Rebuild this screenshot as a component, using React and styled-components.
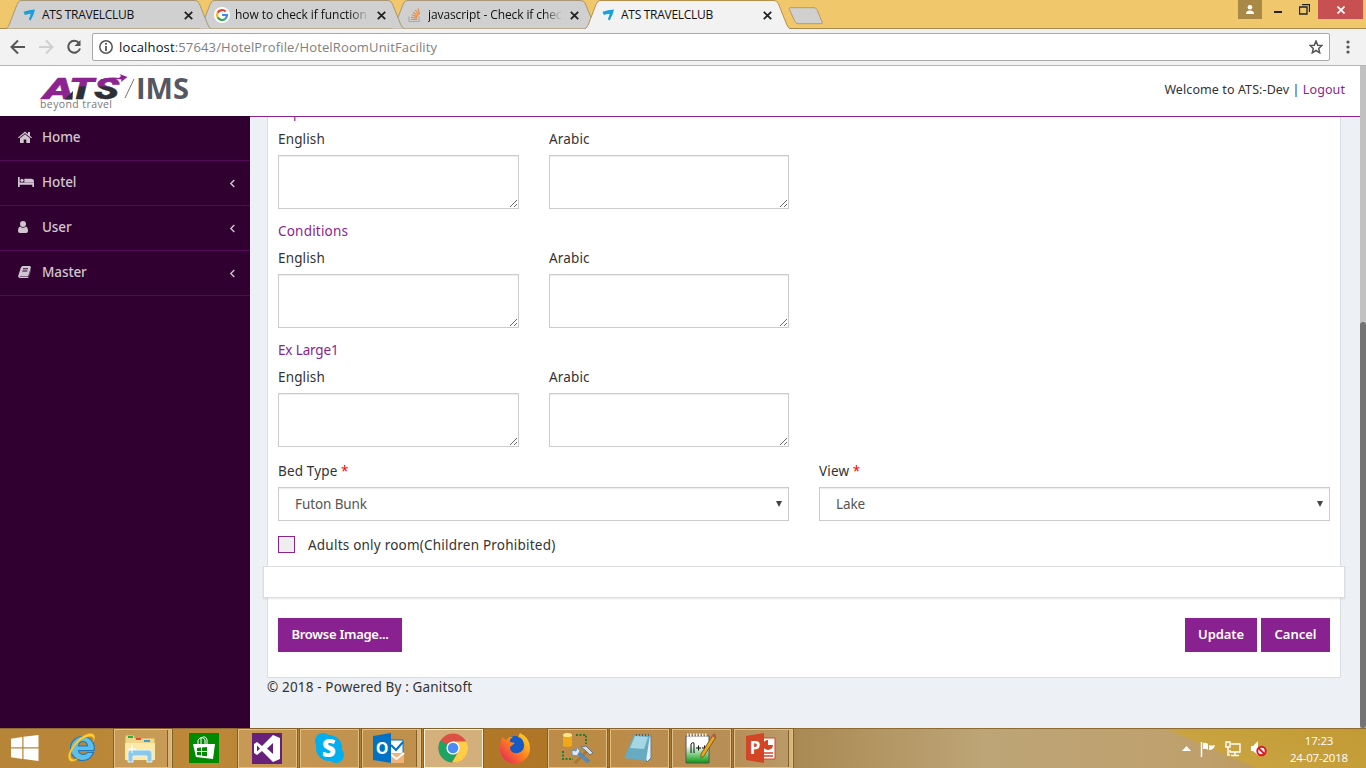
import React from "react";
import styled, { createGlobalStyle, css } from "styled-components";

const Global = createGlobalStyle`
  *{box-sizing:border-box}
  html,body{margin:0;padding:0;overflow:hidden}
  body{width:1366px;height:768px;font-family:"Noto Sans","Open Sans",sans-serif;font-size:13.5px;color:#333}
  svg{display:block;flex:none}
`;

const ui = css`font-family:"Open Sans","Noto Sans",sans-serif;`;

const Screen = styled.div`width:1366px;height:768px;display:flex;flex-direction:column;overflow:hidden;`;

/* browser frame */
const TitleBar = styled.div`height:29px;flex:none;display:flex;background:#f0c76b;border-bottom:1px solid #a88a4e;padding-left:6px;`;
const TabShape = styled.svg`position:absolute;inset:0;`;
const Tab = styled.div`
  position:relative;width:205px;height:29px;margin-right:-12px;flex:none;
  z-index:${p => p.$z};display:flex;align-items:center;padding:1px 16px 0 15px;
`;
const TabIcon = styled.span`position:relative;width:16px;margin-right:5px;`;
const TabTitle = styled.span`
  ${ui} position:relative;width:137px;font-size:12px;line-height:16px;color:#111;white-space:nowrap;overflow:hidden;
  letter-spacing:${p => p.$ls || 0}px;
  ${p => p.$fade && css`mask-image:linear-gradient(90deg,#000 84%,transparent 98%);`}
`;
const TabClose = styled.svg`position:relative;margin-left:5px;`;
const NewTab = styled.svg`margin:7px 0 0 10px;`;
const WindowButtons = styled.div`display:flex;margin-left:auto;margin-right:3px;height:19px;`;
const WinBtn = styled.div`width:${p => p.$w}px;height:19px;display:flex;justify-content:center;align-items:center;background:${p => p.$bg || "transparent"};`;

const Toolbar = styled.div`height:37px;flex:none;display:flex;align-items:center;background:#f2f2f2;border-bottom:1px solid #b6b4b6;padding:0 10px;`;
const NavIcons = styled.div`display:flex;gap:12px;width:82px;`;
const UrlBox = styled.div`
  ${ui} width:1238px;height:28px;background:#fff;border:1px solid #a9a9a9;border-radius:2px;display:flex;align-items:center;
  padding:0 6px;font-size:13px;color:#808080;
`;
const Url = styled.span`margin-left:6px;flex:1;letter-spacing:${p => p.$ls}px;b{font-weight:400;color:#111}`;
const Kebab = styled.svg`margin-left:16px;`;

/* site */
const Page = styled.div`height:662px;flex:none;display:flex;background:#edf0f5;`;
const Site = styled.div`width:1360px;display:flex;flex-direction:column;`;
const Scroll = styled.div`width:6px;background:#c1c1c1;padding-top:256px;`;
const Thumb = styled.div`height:406px;background:#737373;border-radius:3px;`;
const Header = styled.header`height:50px;flex:none;background:#fff;display:flex;justify-content:space-between;padding:0 15px 0 38px;`;
const Account = styled.div`font-size:12.5px;line-height:20px;padding-top:14px;letter-spacing:.09px;color:#333;white-space:nowrap;a{color:#8b2490}`;
const Body = styled.div`display:flex;height:612px;`;
const Sidebar = styled.nav`width:250px;flex:none;background:#2f0030;`;
const NavItem = styled.div`
  height:45px;border-bottom:1px solid #55085a;display:flex;align-items:center;padding:0 13px 3px 18px;
  color:#cfc6cf;letter-spacing:-.1px;font-weight:500;
`;
const NavIcon = styled.span`width:24px;display:flex;`;
const NavText = styled.span`flex:1;`;
const Content = styled.main`width:1110px;height:612px;border-top:1px solid #8b2490;overflow:hidden;`;
const Card = styled.section`width:1074px;height:576px;margin-left:17px;margin-top:-15px;background:#fff;border:1px solid #dcdde0;border-top:0;padding:0 10px;`;
const Heading = styled.div`height:27px;line-height:20px;color:#8b2490;letter-spacing:${p => p.$ls ?? 0.2}px;`;
const Pair = styled.div`display:grid;grid-template-columns:241px 240px;column-gap:30px;`;
const Halves = styled.div`display:grid;grid-template-columns:511px 511px;column-gap:30px;margin-top:2px;`;
const Label = styled.label`display:block;height:26px;line-height:20px;color:#333;letter-spacing:.15px;i{color:#f00;font-style:normal}`;
const Area = styled.textarea`display:block;width:100%;height:54px;margin:0 0 12px;border:1px solid #ccc;box-shadow:inset 0 1px 1px rgba(0,0,0,.075);resize:both;background:#fff;`;
const Select = styled.div`
  height:34px;border:1px solid #ccc;box-shadow:inset 0 1px 1px rgba(0,0,0,.075);display:flex;align-items:center;justify-content:space-between;
  padding:0 6px 1px 16px;color:#555;letter-spacing:-.1px;
`;
const CheckRow = styled.div`display:flex;align-items:center;height:18px;margin-top:15px;padding-bottom:1px;gap:13px;letter-spacing:.22px;`;
const Box = styled.span`width:17px;height:17px;border:1px solid #8b2490;background:#eee;`;
const Strip = styled.div`position:relative;height:32px;margin:12px -15px 20px;background:#fff;border:1px solid #dcdde0;box-shadow:0 1px 2px rgba(0,0,0,.1);`;
const Actions = styled.div`display:flex;gap:4px;`;
const Button = styled.button`
  width:${p => p.$w}px;height:34px;border:0;padding:0 0 3px;background:#892290;color:#fff;font-family:"Noto Sans",sans-serif;
  font-size:13px;font-weight:600;letter-spacing:${p => p.$ls}px;white-space:nowrap;
  margin-right:${p => (p.$push ? "auto" : 0)};
`;
const Footer = styled.footer`margin-left:17px;line-height:18px;letter-spacing:.15px;`;

/* taskbar */
const Taskbar = styled.div`
  height:40px;flex:none;display:flex;
  background:linear-gradient(23.5deg,transparent 0 86%,#c8a33f 86.6%,#c29a35 100%),linear-gradient(90deg,#b78538 0,#bd8838 15%,#b27b2c 28%,#ad7424 44%,#a87a3a 54%,#ab8b55 59%,#bda577 72%,#bfa06c 88%,#b98f42 100%);
  border-top:1px solid #8f6b33;
`;
const Task = styled.div`
  width:${p => p.$w || 59}px;margin-right:3px;display:flex;align-items:center;justify-content:center;height:39px;
  ${p => p.$open && css`border:1px solid ${p.$active ? "#fff3d9" : "#dfbf88"};outline:1px solid #85602a;background:rgba(255,245,225,${p.$active ? 0.45 : 0.18});`}
  ${p => p.$stack && css`box-shadow:inset -4px 0 0 -1px #d7b47a, inset -5px 0 0 -1px #85602a;padding-right:4px;`}
`;
const TaskArt = styled.span`margin-left:-2px;margin-top:-1px;`;
const Tray = styled.div`margin-left:auto;display:flex;align-items:center;gap:9px;padding-right:16px;`;
const Clock = styled.div`${ui} width:62px;margin-left:12px;font-size:11.5px;line-height:17px;letter-spacing:-.2px;color:#fff;text-align:center;white-space:nowrap;`;

const AtsMark = () => (
  <svg width="16" height="16" viewBox="0 0 16 16"><path d="M2.500 4.800Q8 3 14 2.500 13 8 9.500 13.500L7.800 12.200Q9.400 9.500 9.600 6.800 6 7 3.800 8Z" fill="#17a0dc" /></svg>
);
const GoogleMark = () => (
  <svg width="16" height="16" viewBox="0 0 16 16"><circle cx="8" cy="8" r="8" fill="#fff" />
    <g fill="none" strokeWidth="2.2"><path d="M11.6 4.5A5 5 0 0 0 3.6 5.7" stroke="#ea4335" /><path d="M3.6 5.7a5 5 0 0 0 0 4.6" stroke="#fbbc05" /><path d="M3.6 10.3a5 5 0 0 0 7.8 1.4" stroke="#34a853" /><path d="M11.4 11.7A5 5 0 0 0 13 8H8" stroke="#4285f4" /></g>
  </svg>
);
const StackMark = () => (
  <svg width="16" height="16" viewBox="0 0 16 16" fill="none"><path d="M2 9.5V14.5H12V9.5" stroke="#aaa" strokeWidth="1.2" /><path d="M4 12.5h6M4.1 10.3l6 .9M4.7 7.7l5.6 2.2M6 5.2l5 3.5M8.2 3l3.7 4.7M11 1.5l1.7 5.6" stroke="#ec8a3c" strokeWidth="1.2" /></svg>
);
const BrowserTab = ({ title, icon, active, z, fade, ls }) => (
  <Tab $z={z}>
    <TabShape width="205" height="29" viewBox="0 0 205 29"><path d="M0 28.5C2 28 2.5 26 3.5 24L11 4.5Q12.5.5 15 .5H189Q192 .5 193.5 4L201.5 24Q203 28 205 28.5" fill={active ? "#f2f2f2" : "#d0d0d0"} stroke={active ? "#b7924b" : "#a89877"} />
      {active && <path d="M1 28.5H204" stroke="#f2f2f2" />}</TabShape>
    <TabIcon>{icon}</TabIcon><TabTitle $fade={fade} $ls={ls}>{title}</TabTitle>
    <TabClose width="9" height="9" viewBox="0 0 9 9"><path d="m.8.8 7.4 7.4M8.2.8.8 8.2" stroke="#222" strokeWidth="1.8" /></TabClose>
  </Tab>
);

const Logo = () => (
  <svg width="156" height="50" viewBox="38 0 156 50">
    <defs><linearGradient id="ats" x1="0" y1="12" x2="0" y2="33" gradientUnits="userSpaceOnUse"><stop offset=".38" stopColor="#8b2490" /><stop offset=".42" stopColor="#2c2f38" /></linearGradient></defs>
    <g fontFamily="Roboto" fontWeight="900" fontStyle="italic" fontSize="29" strokeWidth=".4">
      <text x="43" y="33" textLength="31" lengthAdjust="spacingAndGlyphs" fill="#8b2490" stroke="#8b2490">A</text>
      <text x="69" y="33" textLength="50" lengthAdjust="spacingAndGlyphs" fill="url(#ats)" stroke="url(#ats)">TS</text>
    </g>
    <path d="M64.500 33.500 73 25l-.5 8.500Z" fill="#2c2f38" />
    <path d="M100 13.500q11-3 19-1.500l2-2-1.500-2 8 3-6.500 5 .5-2.500q-9-1.500-17 2Z" fill="#8b2490" />
    <path d="m134 13-9 19" stroke="#777" />
    <text x="136" y="33" fontFamily="Open Sans" fontWeight="700" fontSize="29" textLength="53" lengthAdjust="spacingAndGlyphs" fill="#555763">IMS</text>
    <text x="40" y="42" fontFamily="Open Sans" fontSize="10.5" textLength="72" fill="#777">beyond travel</text>
  </svg>
);

const sideIcons = {
  home: <svg width="14" height="12" viewBox="0 0 14 12" fill="#cfc6cf"><path d="M7 .5 0 6.400l.8.9L7 2.200l6.200 5.100.8-.9-2-1.700V1h-2v2Z" /><path d="M2 7.300V12h3.700V8.500h2.600V12H12V7.300L7 3.200Z" /></svg>,
  bed: <svg width="16" height="10" viewBox="0 0 16 10" fill="#cfc6cf"><path d="M0 0h1.700v5.500H16V10h-1.700V7.800H1.700V10H0Z" /><circle cx="4" cy="3.300" r="1.600" /><path d="M6.300 1.800H13a3 3 0 0 1 3 3v.7H6.300Z" /></svg>,
  user: <svg width="10" height="12" viewBox="0 0 10 12" fill="#cfc6cf"><circle cx="5" cy="3" r="3" /><path d="M2.200 5.500Q5 8 7.800 5.500 10 6 10 10q0 2-2 2H2q-2 0-2-2 0-4 2.200-4.500Z" /></svg>,
  book: <svg width="13" height="12" viewBox="0 0 13 12"><path d="M4.500 0H12l1 1-2.500 8.500-1 1H2l-.4.600h9L13 3v1l-2.200 7-.8 1H2Q-.2 12 .3 9.500L3 1.200Z" fill="#cfc6cf" /><path d="M5 2.800h5M4.300 5h5" stroke="#2f0030" /></svg>,
};
const ChevronBox = styled.span`padding-top:3px;`;
const Chevron = () => <ChevronBox><svg width="9" height="9" viewBox="0 0 9 9"><path d="M6.300 1 2.800 4.500 6.300 8" fill="none" stroke="#cfc6cf" strokeWidth="1.400" /></svg></ChevronBox>;
const Item = ({ icon, text, sub }) => <NavItem><NavIcon>{sideIcons[icon]}</NavIcon><NavText>{text}</NavText>{sub && <Chevron />}</NavItem>;

const Languages = () => (
  <Pair>
    <div><Label>English</Label><Area /></div>
    <div><Label>Arabic</Label><Area /></div>
  </Pair>
);
const Arrow = () => <svg width="6" height="6" viewBox="0 0 6 6"><path d="M0 0h6L3 6Z" fill="#444" /></svg>;

const Windows = () => <svg width="28" height="26" viewBox="0 0 28 26" fill="#fff"><path d="M0 3.700 11.300 2v10.300H0ZM12.500 1.800 27.500 0v12.300h-15ZM0 13.500h11.300V24L0 22.300ZM12.500 13.500h15V26l-15-1.900Z" /></svg>;
const IE = () => <svg width="32" height="32" viewBox="0 0 32 32"><path d="M16.500 4.500A11.500 11.500 0 0 1 28 18.500H12.500q.8 4 4.700 4 3 0 4.300-2h6q-3 8-11 8a12 12 0 0 1 0-24Zm-4 9.500h9q-.5-4.500-4.500-4.500T12.500 14Z" fill="#5cc0ee" stroke="#1f79bb" strokeWidth="1.200" /><path d="M5 29.500Q-1 26 6 15 13 4 23 1.500q7-1 5.500 6-.5 1.500-1.500 2.500 1.500-5.500-2.500-5.500Q16 5 9 14 2 24 6 27q3 1 7-1-4 4-8 3.500Z" fill="#ffce33" stroke="#d99d1f" strokeWidth=".5" /></svg>;
const Explorer = () => <svg width="32" height="30" viewBox="0 0 32 30"><path d="M1 4 2 2h8l1 3h20v22H1Z" fill="#f0d68b" stroke="#c9a049" /><path d="M4 3h5v2H4Z" fill="#27ad42" /><path d="M12 5h5v2h-5Z" fill="#e34b2e" /><path d="M20 7h6v2h-6Z" fill="#3a9ce0" /><path d="M1 10h30v17H1Z" fill="#fbe9a8" /><path d="M4 29V20q0-3 3-3h18q3 0 3 3v9h-5v-6H9v6Z" fill="#8bc9ea" stroke="#e5f4fb" /><path d="M8 12v8M4 16h8" stroke="#fff" /></svg>;
const Store = () => <svg width="30" height="30" viewBox="0 0 30 30"><path fill="#008a00" d="M0 0h30v30H0Z" /><path d="M4 11h22l-2 15-17-2Z" fill="#fff" /><path d="M9 11V7q4-5 7 0v4M12 11V5q5-3 6 2v4" stroke="#fff" fill="none" /><path d="m8 15 4-.5V18H8ZM13 14.500l5-.5v4h-5ZM8 19h4v3.500L8 22ZM13 19h5v4.300l-5-.6Z" fill="#008a00" /></svg>;
const VS = () => <svg width="30" height="31" viewBox="0 0 30 31"><path fill="#68217a" d="M0 0h30v31H0Z" /><path d="m21 2 7 3v21l-7 3L10 18l-5 4-3-2V11l3-2 5 4Zm0 8-6 5.500 6 5.500ZM5 12.500v6l3-3Z" fill="#fff" fillRule="evenodd" /></svg>;
const Skype = () => <svg width="30" height="30" viewBox="0 0 30 30"><g fill="#00aff0"><circle cx="15" cy="15" r="13" /><circle cx="9" cy="8" r="8" /><circle cx="22" cy="22" r="8" /></g><text x="15" y="23.500" textAnchor="middle" fontFamily="Open Sans" fontSize="24" fontWeight="800" fill="#fff">S</text></svg>;
const Outlook = () => <svg width="32" height="30" viewBox="0 0 32 30"><path d="M17 7h13v14H17Z" fill="#fff" stroke="#0072c6" /><path d="m18 12 5 5 7-8" stroke="#0072c6" strokeWidth="2" fill="none" /><path d="M16 20h15v10H16Z" fill="#f3b278" /><path d="m16 20 7.500 6 7.500-6" stroke="#fff" strokeWidth="2" fill="none" /><path d="M0 3 18 0v30L0 27Z" fill="#0072c6" /><text x="9" y="21" textAnchor="middle" fontFamily="Open Sans" fontSize="16" fontWeight="700" fill="#fff">O</text></svg>;
const Chrome = () => <svg width="30" height="30" viewBox="0 0 30 30"><circle cx="15" cy="15" r="14.500" fill="#dd5144" /><path d="M15 15 2.500 7.600A14.500 14.500 0 0 0 14 29.500l6-11Z" fill="#1da462" /><path d="M15 8.500h13.300A14.500 14.500 0 0 1 14 29.500l6.600-11.200Z" fill="#ffcd46" /><circle cx="15" cy="15" r="6.600" fill="#fff" /><circle cx="15" cy="15" r="5.300" fill="#4c8bf5" /></svg>;
const Firefox = () => <svg width="32" height="32" viewBox="0 0 32 32"><defs><linearGradient id="fx" x1="1" y1="0" x2="0" y2="1"><stop stopColor="#ffe226" /><stop offset=".5" stopColor="#ff7e20" /><stop offset="1" stopColor="#e31665" /></linearGradient></defs><circle cx="16" cy="16" r="12" fill="#155ac5" /><path d="m3 5 4 3q3-4 7-3-4 2-3 5l5 1-5 4q0 7 8 6 7-2 6-9-1-6-6-7l2-4q10 5 10 15a15 15 0 0 1-30 1Q1 10 3 5Z" fill="url(#fx)" /></svg>;
const Tools = () => <svg width="32" height="32" viewBox="0 0 32 32" fill="none"><path d="M2 3h9v11q-4 2-9 0Z" fill="#efa817" /><ellipse cx="6.500" cy="3" rx="4.500" ry="2" fill="#ffe58a" /><path d="M15 3h10v9M2 19v8h10" stroke="#287b35" strokeWidth="2" strokeDasharray="2 1.500" /><path d="m14 31 13-13" stroke="#a87732" strokeWidth="3" /><path d="m20 15 5-1 7 7-3 2-4-4Z" fill="#d5dce2" stroke="#657582" /><path d="m15 19 13 11" stroke="#5989b5" strokeWidth="4" /><path d="M11 18v5l5 1 3-5-3-4-1 4Z" fill="#dae9f3" stroke="#6d8eab" /></svg>;
const Notepad = () => <svg width="32" height="32" viewBox="0 0 32 32"><path d="m11 3 17 1v22l-4 4Z" fill="#e4eef1" stroke="#667d85" /><path d="M11 3h16L23 29 1 26Z" fill="#67abc2" /><path d="m12 4 13 1-4 12-14-1Z" fill="#a5d6e3" /><path d="M13 3h14" stroke="#49656f" strokeWidth="2" strokeDasharray="1 2" /></svg>;
const Npp = () => <svg width="32" height="31" viewBox="0 0 32 31"><defs><linearGradient id="np" x2="0" y2="1"><stop offset=".35" stopColor="#fff" /><stop offset="1" stopColor="#079a0c" /></linearGradient></defs><path d="M1 3h23v27H1Z" fill="url(#np)" stroke="#555" /><path d="M2 2h21" stroke="#eee" strokeWidth="3" strokeDasharray="1.500 1.500" /><path d="M6 20V11q3-3 3 0v9" stroke="#111" fill="none" /><path d="M11 15h5m-2.500-2.500v5M17 15h5m-2.500-2.500v5" stroke="#111" /><path d="m28 2 3 2-12 19-3 2v-4Z" fill="#eaa61d" stroke="#805b20" /><path d="m27 3 3 2 1-3-2-2Z" fill="#c75045" /></svg>;
const Ppt = () => <svg width="30" height="30" viewBox="0 0 30 30"><path d="M15 5h14v21H15Z" fill="#fff" stroke="#d24625" /><circle cx="22" cy="12" r="5" fill="#d24625" /><path d="M22 12V7h5v5Z" fill="#fff" /><path d="M18 20h9M18 23h9" stroke="#d24625" strokeWidth="1.500" /><path d="M0 3 18 0v30L0 27Z" fill="#d24625" /><text x="9" y="21" textAnchor="middle" fontFamily="Open Sans" fontSize="17" fontWeight="700" fill="#fff">P</text></svg>;

const TaskButton = ({ w, open, stack, active, children }) => <Task $w={w} $open={open} $stack={stack} $active={active}><TaskArt>{children}</TaskArt></Task>;

export default function App() {
  return (
    <Screen>
      <Global />
      <TitleBar>
        <BrowserTab z={3} icon={<AtsMark />} title="ATS TRAVELCLUB" ls={-0.28} />
        <BrowserTab z={2} icon={<GoogleMark />} title="how to check if function i" fade ls={-0.06} />
        <BrowserTab z={1} icon={<StackMark />} title="javascript - Check if check" fade ls={-0.1} />
        <BrowserTab z={4} icon={<AtsMark />} title="ATS TRAVELCLUB" active ls={-0.28} />
        <NewTab width="36" height="18" viewBox="0 0 36 18"><path d="M2 .7h24q2 0 3 2l5 12q1 2-1 2H10q-2 0-3-2L1.500 2.700Q.8.700 2 .7Z" fill="#d0d0d0" stroke="#b59b65" /></NewTab>
        <WindowButtons>
          <WinBtn $w={24} $bg="#a88a46"><svg width="10" height="9" viewBox="0 0 10 9" fill="#fff"><circle cx="5" cy="2.300" r="2.300" /><path d="M1 9Q1 5.500 5 5.500T9 9Z" /></svg></WinBtn>
          <WinBtn $w={32}><svg width="8" height="9"><path d="M0 6h8v2H0Z" fill="#222" /></svg></WinBtn>
          <WinBtn $w={20}><svg width="11" height="11" fill="none" stroke="#222"><path d="M.5 3H8v7H.5ZM3 .5h7.500V8" strokeWidth="1.300" /></svg></WinBtn>
          <WinBtn $w={4} />
          <WinBtn $w={45} $bg="#c75050"><svg width="8" height="8"><path d="m.5.5 7 7m0-7-7 7" stroke="#fff" strokeWidth="1.700" /></svg></WinBtn>
        </WindowButtons>
      </TitleBar>
      <Toolbar>
        <NavIcons>
          <svg width="16" height="16" viewBox="0 0 16 16" fill="none" stroke="#555" strokeWidth="2"><path d="M15 8H2m6-6.500L1.500 8 8 14.500" /></svg>
          <svg width="16" height="16" viewBox="0 0 16 16" fill="none" stroke="#d0d0d0" strokeWidth="2"><path d="M1 8h13M8 1.500 14.500 8 8 14.500" /></svg>
          <svg width="16" height="16" viewBox="0 0 16 16" fill="none" stroke="#555" strokeWidth="2"><path d="M13 4A6 6 0 1 0 14 9.500" /><path d="M14.500 1v6h-6Z" fill="#555" stroke="none" /></svg>
        </NavIcons>
        <UrlBox>
          <svg width="14" height="14" viewBox="0 0 14 14"><circle cx="7" cy="7" r="6.200" fill="none" stroke="#555" strokeWidth="1.500" /><path d="M6.100 3h1.800v1.700H6.100ZM6.100 6h1.800v5H6.100Z" fill="#555" /></svg>
          <Url $ls={0.14}><b>localhost</b>:57643/HotelProfile/HotelRoomUnitFacility</Url>
          <svg width="14" height="14" viewBox="0 0 14 14"><path d="m7 1 1.700 4.200 4.300.3-3.300 2.900 1 4.400L7 10.500l-3.700 2.300 1-4.400L1 5.500l4.300-.3Z" fill="none" stroke="#555" strokeWidth="1.500" /></svg>
        </UrlBox>
        <Kebab width="4" height="14" viewBox="0 0 4 14" fill="#555"><circle cx="2" cy="2" r="1.600" /><circle cx="2" cy="7" r="1.600" /><circle cx="2" cy="12" r="1.600" /></Kebab>
      </Toolbar>
      <Page>
        <Site>
          <Header><Logo /><Account>Welcome to ATS:-Dev | <a>Logout</a></Account></Header>
          <Body>
            <Sidebar>
              <Item icon="home" text="Home" /><Item icon="bed" text="Hotel" sub /><Item icon="user" text="User" sub /><Item icon="book" text="Master" sub />
            </Sidebar>
            <Content>
              <Card>
                <Heading>Experience</Heading><Languages />
                <Heading>Conditions</Heading><Languages />
                <Heading $ls={-0.15}>Ex Large1</Heading><Languages />
                <Halves>
                  <div><Label>Bed Type <i>*</i></Label><Select>Futon Bunk<Arrow /></Select></div>
                  <div><Label>View <i>*</i></Label><Select>Lake<Arrow /></Select></div>
                </Halves>
                <CheckRow><Box />Adults only room(Children Prohibited)</CheckRow>
                <Strip />
                <Actions><Button $w={124} $ls={-0.27} $push>Browse Image...</Button><Button $w={72} $ls={-0.1}>Update</Button><Button $w={69} $ls={0}>Cancel</Button></Actions>
              </Card>
              <Footer>© 2018 - Powered By : Ganitsoft</Footer>
            </Content>
          </Body>
        </Site>
        <Scroll><Thumb /></Scroll>
      </Page>
      <Taskbar>
        <TaskButton w={52}><Windows /></TaskButton><TaskButton w={56}><IE /></TaskButton>
        <TaskButton w={58} open stack><Explorer /></TaskButton><TaskButton w={60}><Store /></TaskButton>
        <TaskButton open><VS /></TaskButton><TaskButton open><Skype /></TaskButton><TaskButton open stack><Outlook /></TaskButton>
        <TaskButton open active><Chrome /></TaskButton><TaskButton><Firefox /></TaskButton><TaskButton open><Tools /></TaskButton>
        <TaskButton open><Notepad /></TaskButton><TaskButton open><Npp /></TaskButton><TaskButton open stack><Ppt /></TaskButton>
        <Tray>
          <svg width="9" height="5"><path d="m0 5 4.500-5L9 5Z" fill="#fff" /></svg>
          <svg width="16" height="16" viewBox="0 0 16 16"><path d="M1.500 1v15" stroke="#fff" strokeWidth="1.500" /><path d="M3 2q3-1 5 1v6Q6 7 3 8ZM9 4q3 1 6 0-1 5-6 5Z" fill="#fff" /></svg>
          <svg width="16" height="16" viewBox="0 0 16 16" fill="none" stroke="#fff" strokeWidth="1.400"><path d="M6 3h9v8H5V9M10 11v3M6 14.500h8M1 1h4v5H1ZM3 6v8h2" /></svg>
          <svg width="17" height="17" viewBox="0 0 17 17"><path d="M1 6h2l5-5v14l-5-4H1Z" fill="#fff" /><circle cx="11.500" cy="11" r="4.200" fill="#fff" stroke="#df1828" strokeWidth="2" /><path d="m8.500 8 6 6" stroke="#df1828" strokeWidth="2" /></svg>
          <Clock>17:23<br />24-07-2018</Clock>
        </Tray>
      </Taskbar>
    </Screen>
  );
}
